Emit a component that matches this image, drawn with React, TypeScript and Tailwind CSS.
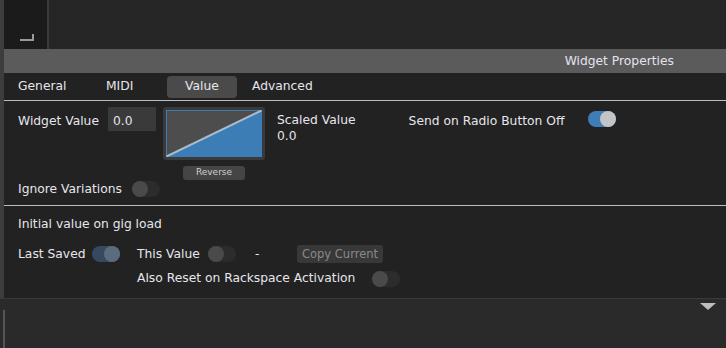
import React from "react";

const font = { fontFamily: '"DejaVu Sans", Verdana, sans-serif' };

function Toggle({ state }: { state: "on" | "off" | "dim" }) {
  if (state === "on") {
    return (
      <div className="relative w-[28px] h-[16px] rounded-full bg-[#3f7db6]">
        <div className="absolute right-0 top-0 w-[16px] h-[16px] rounded-full bg-[#c4c4c4]" />
      </div>
    );
  }
  if (state === "dim") {
    return (
      <div className="relative w-[28px] h-[16px] rounded-full bg-[#354a5e]">
        <div className="absolute right-0 top-0 w-[16px] h-[16px] rounded-full bg-[#5b6c7c]" />
      </div>
    );
  }
  return (
    <div className="relative w-[28px] h-[16px] rounded-full bg-[#2c2c2c]">
      <div className="absolute left-0 top-0 w-[16px] h-[16px] rounded-full bg-[#4a4a4a]" />
    </div>
  );
}

export default function App() {
  return (
    <div className="w-[726px] h-[348px] overflow-hidden bg-[#2a2a2a] text-[12.3px] text-[#e6e6ec] flex flex-col" style={font}>
      <div className="flex h-[298px]">
        <div className="w-[4px] bg-[#3d3d3d]" />
        <div className="flex-1 flex flex-col">
          {/* top area */}
          <div className="flex h-[49px]">
            <div className="w-[43px] bg-[#1b1b1b] relative">
              <div className="absolute left-[16px] top-[39px] w-[14px] h-[2px] bg-[#9a9a9a]" />
              <div className="absolute left-[28px] top-[34px] w-[2px] h-[7px] bg-[#9a9a9a]" />
            </div>
            <div className="w-[2px] bg-[#3a3a3a]" />
            <div className="flex-1 bg-[#262626]" />
          </div>
          {/* header */}
          <div className="h-[24px] bg-[#5b5b5b] flex items-center justify-end pr-[52px]">
            <span className="text-[12.3px] text-[#e4e2ee] mt-[1px]">Widget Properties</span>
          </div>
          {/* body */}
          <div className="flex-1 bg-[#222222] flex flex-col">
            <div className="h-[28px] flex items-center border-b border-[#bdbdbd]">
              <span className="ml-[14px] w-[88px]">General</span>
              <span className="w-[61px]">MIDI</span>
              <div className="w-[70px] h-[22px] rounded-[4px] bg-[#4a4a4a] flex items-center justify-center">Value</div>
              <span className="ml-[15px]">Advanced</span>
            </div>
            <div className="h-[105px] border-b border-[#bdbdbd] relative flex">
              <div className="flex flex-col pl-[14px]">
                <div className="flex items-start mt-[6px]">
                  <span className="mt-[5px] w-[90px]">Widget Value</span>
                  <div className="w-[48px] h-[24px] bg-[#3a3a3a] pl-[5px] pt-[5px]">0.0</div>
                  <div className="ml-[7px] flex flex-col items-center">
                    <div className="w-[102px] h-[53px] rounded-[3px] bg-[#3a3a3a] p-[3px]">
                      <svg width="96" height="47" viewBox="0 0 96 47">
                        <rect x="0.5" y="0.5" width="95" height="46" fill="#4d4d4d" stroke="#3d7db6" />
                        <polygon points="0.5,46.5 95.5,0.5 95.5,46.5" fill="#3d7db6" />
                        <line x1="0.5" y1="46.5" x2="95.5" y2="0.5" stroke="#a9bccb" strokeWidth="2" />
                      </svg>
                    </div>
                    <div className="mt-[6px] w-[62px] h-[14px] rounded-[3px] bg-[#454545] text-[9px] text-[#cfcfcf] flex items-center justify-center">Reverse</div>
                  </div>
                  <div className="ml-[12px] mt-[5px] flex flex-col leading-[16px]">
                    <span>Scaled Value</span>
                    <span>0.0</span>
                  </div>
                  <div className="ml-[53px] mt-[5px] flex items-start">
                    <span>Send on Radio Button Off</span>
                    <div className="ml-[24px] mt-[-1px]"><Toggle state="on" /></div>
                  </div>
                </div>
                <div className="flex items-center">
                  <span className="w-[114px]">Ignore Variations</span>
                  <Toggle state="off" />
                </div>
              </div>
            </div>
            <div className="flex-1 flex flex-col pl-[14px]">
              <span className="mt-[9px]">Initial value on gig load</span>
              <div className="flex items-center mt-[12px] h-[18px]">
                <span className="w-[74px]">Last Saved</span>
                <Toggle state="dim" />
                <span className="ml-[17px] w-[71px]">This Value</span>
                <Toggle state="off" />
                <span className="ml-[19px] w-[42px]">-</span>
                <div className="w-[86px] h-[18px] rounded-[3px] bg-[#383838] text-[11.5px] text-[#8a8a8a] flex items-center justify-center">Copy Current</div>
              </div>
              <div className="flex items-center mt-[6px] ml-[119px]">
                <span className="w-[235px]">Also Reset on Rackspace Activation</span>
                <Toggle state="off" />
              </div>
            </div>
          </div>
        </div>
      </div>
      <div className="h-[1px] bg-[#3a3a3a]" />
      <div className="flex-1 bg-[#2a2a2a] flex">
        <div className="w-[3px]" />
        <div className="w-[2px] mt-[11px] bg-[#555555]" />
        <div className="flex-1 flex justify-end pr-[10px] pt-[4px]">
          <svg width="16" height="8" viewBox="0 0 16 8"><polygon points="0,0 16,0 8,7" fill="#bdbdbd" /></svg>
        </div>
      </div>
    </div>
  );
}
